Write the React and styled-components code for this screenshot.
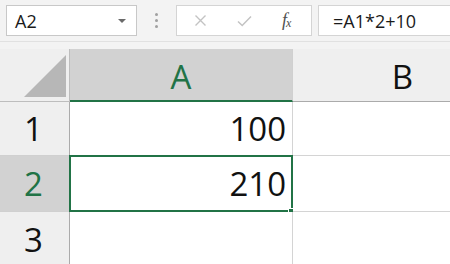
import React from "react";
import styled, { createGlobalStyle } from "styled-components";

const Global = createGlobalStyle`
  html, body { margin: 0; padding: 0; background: #f3f3f3; overflow: hidden; }
  body { font-family: "Open Sans", "Noto Sans", sans-serif; }
`;

const Page = styled.div`
  width: 450px;
  height: 264px;
  overflow: hidden;
  background: #f3f3f3;
`;

const Toolbar = styled.div`
  height: 42px;
  display: flex;
  align-items: center;
  padding-left: 6px;
  box-sizing: border-box;
  background: #f3f3f3;
  border-bottom: 1px solid #e1e1e1;
`;

const NameBox = styled.div`
  width: 131px;
  height: 31px;
  flex: none;
  box-sizing: border-box;
  background: #fff;
  border: 1px solid #c8c8c8;
  display: flex;
  align-items: center;
  justify-content: space-between;
  padding: 0 10px 0 8px;
  font-size: 18px;
  color: #1a1a1a;
`;

const Arrow = styled.span`
  width: 0;
  height: 0;
  border-left: 4px solid transparent;
  border-right: 4px solid transparent;
  border-top: 4px solid #6a6a6a;
`;

const Dots = styled.div`
  width: 39px;
  flex: none;
  display: flex;
  flex-direction: column;
  align-items: center;
  gap: 3px;
  span {
    width: 3px;
    height: 3px;
    border-radius: 50%;
    background: #a0a0a0;
  }
`;

const FuncBox = styled.div`
  width: 136px;
  flex: none;
  height: 31px;
  box-sizing: border-box;
  background: #fff;
  border: 1px solid #d4d4d4;
  display: flex;
  align-items: center;
  padding-left: 17px;
`;

const IconSlot = styled.div`
  width: ${(p) => p.w}px;
  display: flex;
  align-items: center;
  justify-content: flex-start;
`;

const Fx = styled.span`
  font-family: "Liberation Serif", "DejaVu Serif", serif;
  font-style: italic;
  font-size: 18px;
  color: #505050;
  letter-spacing: -1px;
  sub {
    font-size: 12px;
    vertical-align: -1px;
  }
`;

const FormulaBox = styled.div`
  flex: 1;
  margin-left: 6px;
  height: 31px;
  box-sizing: border-box;
  background: #fff;
  border: 1px solid #d4d4d4;
  border-right: none;
  display: flex;
  align-items: center;
  padding-left: 14px;
  font-size: 18px;
  color: #1a1a1a;
`;

const Spacer = styled.div`
  height: 7px;
`;

const Grid = styled.div`
  display: grid;
  width: 513px;
  grid-template-columns: 70px 223px 220px;
  grid-template-rows: 53px 54px 56px 56px;
  background: #fff;
`;

const Corner = styled.div`
  background: #efefef;
  border-right: 1px solid #bdbdbd;
  border-bottom: 1px solid #bdbdbd;
  box-sizing: border-box;
  display: flex;
  align-items: flex-end;
  justify-content: flex-end;
  padding: 0 3px 4px 0;
`;

const ColHeader = styled.div`
  box-sizing: border-box;
  background: ${(p) => (p.active ? "#d2d2d2" : "#efefef")};
  border-right: 1px solid #d0d0d0;
  border-bottom: ${(p) => (p.active ? "2px solid #217346" : "1px solid #ababab")};
  display: flex;
  align-items: center;
  justify-content: center;
  font-size: 33px;
  color: ${(p) => (p.active ? "#217346" : "#111")};
  padding-top: 3px;
`;

const RowHeader = styled.div`
  box-sizing: border-box;
  background: ${(p) => (p.active ? "#d2d2d2" : "#efefef")};
  border-right: 1px solid #ababab;
  border-bottom: 1px solid #d0d0d0;
  display: flex;
  align-items: center;
  justify-content: center;
  font-size: 33px;
  color: ${(p) => (p.active ? "#217346" : "#111")};
  padding-right: 2px;
`;

const Cell = styled.div`
  position: relative;
  box-sizing: border-box;
  background: #fff;
  border-right: 1px solid #d4d4d4;
  border-bottom: 1px solid #d4d4d4;
  display: flex;
  align-items: center;
  justify-content: flex-end;
  padding-right: 6px;
  font-size: 33px;
  color: #111;
`;

const Selection = styled.div`
  position: absolute;
  left: -1px;
  top: -1px;
  right: -1px;
  bottom: -1px;
  border: 2px solid #217346;
  pointer-events: none;
`;

const Handle = styled.div`
  position: absolute;
  right: -5px;
  bottom: -6px;
  width: 6px;
  height: 6px;
  background: #217346;
  border: 1px solid #fff;
`;

const Value = styled.span`
  position: relative;
  z-index: 1;
`;

function CrossIcon() {
  return (
    <svg width="13" height="13" viewBox="0 0 13 13">
      <path d="M1.5 1.5 L11.5 11.5 M11.5 1.5 L1.5 11.5" stroke="#c3c3c3" strokeWidth="1.4" fill="none" />
    </svg>
  );
}

function CheckIcon() {
  return (
    <svg width="15" height="12" viewBox="0 0 15 12">
      <path d="M1 6.5 L5.2 10.5 L14 1.5" stroke="#c3c3c3" strokeWidth="1.5" fill="none" />
    </svg>
  );
}

function CornerTriangle() {
  return (
    <svg width="42" height="42" viewBox="0 0 42 42">
      <polygon points="42,0 42,42 0,42" fill="#b7b7b7" />
    </svg>
  );
}

export default function App() {
  return (
    <Page>
      <Global />
      <Toolbar>
        <NameBox>
          <span>A2</span>
          <Arrow />
        </NameBox>
        <Dots>
          <span />
          <span />
          <span />
        </Dots>
        <FuncBox>
          <IconSlot w={43}>
            <CrossIcon />
          </IconSlot>
          <IconSlot w={45}>
            <CheckIcon />
          </IconSlot>
          <Fx>
            f<sub>x</sub>
          </Fx>
        </FuncBox>
        <FormulaBox>=A1*2+10</FormulaBox>
      </Toolbar>
      <Spacer />
      <Grid>
        <Corner>
          <CornerTriangle />
        </Corner>
        <ColHeader active>A</ColHeader>
        <ColHeader>B</ColHeader>

        <RowHeader>1</RowHeader>
        <Cell>
          <Value>100</Value>
        </Cell>
        <Cell />

        <RowHeader active>2</RowHeader>
        <Cell>
          <Value>210</Value>
          <Selection>
            <Handle />
          </Selection>
        </Cell>
        <Cell />

        <RowHeader>3</RowHeader>
        <Cell />
        <Cell />
      </Grid>
    </Page>
  );
}
